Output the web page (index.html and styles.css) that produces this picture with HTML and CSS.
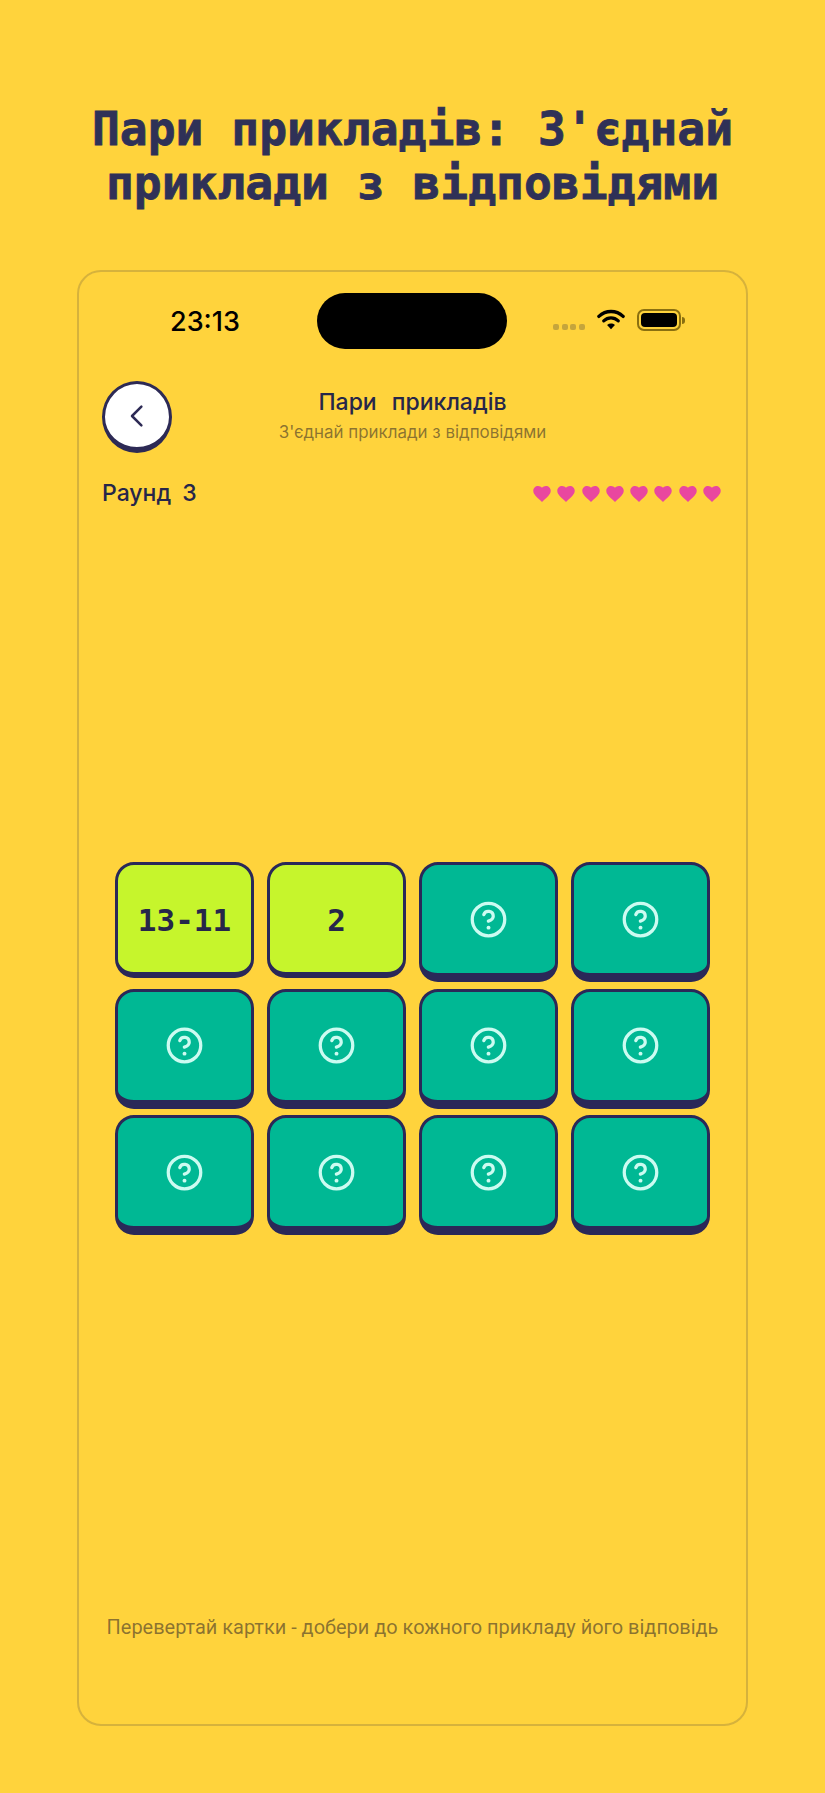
FILE: index.html
```html
<!DOCTYPE html>
<html lang="uk">
<head>
    <meta charset="UTF-8">
    <meta name="viewport" content="width=device-width, initial-scale=1.0">
    <title>Пари прикладів</title>
    <link rel="stylesheet" href="styles.css">
</head>
<body>
    <svg class="sprites" width="0" height="0" aria-hidden="true">
        <symbol id="icon-question" viewBox="0 0 24 24">
            <circle cx="12" cy="12" r="10" fill="none" stroke="currentColor" stroke-width="2"/>
            <path d="M9.09 9a3 3 0 0 1 5.83 1c0 2-3 3-3 3" fill="none" stroke="currentColor" stroke-width="2" stroke-linecap="round" stroke-linejoin="round"/>
            <path d="M12 17h.01" fill="none" stroke="currentColor" stroke-width="2.4" stroke-linecap="round"/>
        </symbol>
        <symbol id="icon-heart" viewBox="2 3 20 18.35">
            <path d="M12 21.35l-1.45-1.32C5.4 15.36 2 12.28 2 8.5 2 5.42 4.42 3 7.5 3c1.74 0 3.41.81 4.5 2.09C13.09 3.81 14.76 3 16.5 3 19.58 3 22 5.42 22 8.5c0 3.78-3.4 6.86-8.55 11.54L12 21.35z" fill="currentColor"/>
        </symbol>
    </svg>

    <h1 class="page-title">Пари прикладів: З'єднай приклади з відповідями</h1>

    <div class="phone">
        <div class="status-bar">
            <span class="status-time">23:13</span>
            <div class="island"></div>
            <div class="status-icons">
                <div class="signal"><i></i><i></i><i></i><i></i></div>
                <svg class="wifi" viewBox="0 0 30 22">
                    <path d="M2 8.2C9.5 1.2 20.5 1.2 28 8.2" fill="none" stroke="#000" stroke-width="3.6" stroke-linecap="round"/>
                    <path d="M7.2 13C11.8 8.8 18.2 8.8 22.8 13" fill="none" stroke="#000" stroke-width="3.4" stroke-linecap="round"/>
                    <path d="M15 22 10.8 17.3C13.3 15.3 16.7 15.3 19.2 17.3Z" fill="#000"/>
                </svg>
                <div class="battery"><div class="battery-level"></div></div>
                <div class="battery-cap"></div>
            </div>
        </div>

        <div class="game-header">
            <button class="back-btn" aria-label="Назад">
                <svg viewBox="0 0 24 24" width="30" height="30">
                    <path d="M15.5 4.5 8 12l7.5 7.5" fill="none" stroke="#2d2a55" stroke-width="2" stroke-linecap="round" stroke-linejoin="round"/>
                </svg>
            </button>
            <div class="game-heading">
                <h2>Пари прикладів</h2>
                <p>З'єднай приклади з відповідями</p>
            </div>
        </div>

        <div class="round-row">
            <span class="round-label">Раунд 3</span>
            <div class="hearts">
                <svg class="heart"><use href="#icon-heart"/></svg>
                <svg class="heart"><use href="#icon-heart"/></svg>
                <svg class="heart"><use href="#icon-heart"/></svg>
                <svg class="heart"><use href="#icon-heart"/></svg>
                <svg class="heart"><use href="#icon-heart"/></svg>
                <svg class="heart"><use href="#icon-heart"/></svg>
                <svg class="heart"><use href="#icon-heart"/></svg>
                <svg class="heart"><use href="#icon-heart"/></svg>
            </div>
        </div>

        <div class="board">
            <div class="card open">13-11</div>
            <div class="card open">2</div>
            <div class="card"><svg class="q"><use href="#icon-question"/></svg></div>
            <div class="card"><svg class="q"><use href="#icon-question"/></svg></div>
            <div class="card"><svg class="q"><use href="#icon-question"/></svg></div>
            <div class="card"><svg class="q"><use href="#icon-question"/></svg></div>
            <div class="card"><svg class="q"><use href="#icon-question"/></svg></div>
            <div class="card"><svg class="q"><use href="#icon-question"/></svg></div>
            <div class="card"><svg class="q"><use href="#icon-question"/></svg></div>
            <div class="card"><svg class="q"><use href="#icon-question"/></svg></div>
            <div class="card"><svg class="q"><use href="#icon-question"/></svg></div>
            <div class="card"><svg class="q"><use href="#icon-question"/></svg></div>
        </div>

        <p class="hint">Перевертай картки - добери до кожного прикладу його відповідь</p>
    </div>
</body>
</html>
```

FILE: styles.css
```css
* {
    box-sizing: border-box;
}
html, body {
    margin: 0;
    height: 100%;
}
body {
    background-color: #ffd33c;
    font-family: 'Inter', 'Noto Sans', sans-serif;
    color: #2d2a55;
    padding: 102px 77px 0;
    overflow: hidden;
}
.sprites {
    position: absolute;
}
.page-title {
    margin: 0 -20px;
    font-family: 'DejaVu Sans Mono', monospace;
    font-weight: 700;
    font-size: 46.3px;
    line-height: 54px;
    text-align: center;
    color: #2f3157;
    -webkit-text-stroke: 0.8px #2f3157;
}
.phone {
    width: 671px;
    height: 1456px;
    margin-top: 60px;
    border: 2.5px solid rgba(90, 80, 60, 0.25);
    border-radius: 24px;
    padding: 21px 23px 0;
    display: flex;
    flex-direction: column;
}
.status-bar {
    display: flex;
    align-items: center;
    height: 56px;
    flex-shrink: 0;
}
.status-time {
    width: 215px;
    padding-left: 68px;
    font-size: 27px;
    font-weight: 500;
    color: #000;
}
.island {
    width: 190px;
    height: 56px;
    background: #000;
    border-radius: 28px;
}
.status-icons {
    display: flex;
    align-items: center;
    margin-left: 46px;
}
.signal {
    display: flex;
    gap: 2.5px;
    margin-top: 12px;
    margin-right: 12px;
}
.signal i {
    width: 6px;
    height: 6px;
    border-radius: 2px;
    background: rgba(90, 80, 60, 0.35);
}
.wifi {
    width: 28px;
    height: 22px;
    margin-top: -4px;
    margin-right: 12px;
}
.battery {
    width: 44px;
    height: 22px;
    margin-top: -2px;
    border: 2px solid #8a6f10;
    border-radius: 7px;
    padding: 2px;
}
.battery-level {
    height: 100%;
    background: #000;
    border-radius: 4px;
}
.battery-cap {
    width: 3px;
    height: 7px;
    margin-top: -2px;
    margin-left: 1px;
    background: #8a6f10;
    border-radius: 0 3px 3px 0;
}
.game-header {
    display: flex;
    align-items: flex-start;
    margin-top: 32px;
    height: 72px;
    flex-shrink: 0;
}
.back-btn {
    width: 70px;
    height: 72px;
    flex-shrink: 0;
    background: #fff;
    border: 3px solid #2d2a55;
    border-bottom-width: 6px;
    border-radius: 50%;
    padding: 0;
    display: flex;
    align-items: center;
    justify-content: center;
}
.game-heading {
    flex: 1;
    text-align: center;
    padding-right: 70px;
    padding-top: 6px;
}
.game-heading h2 {
    margin: 0;
    font-size: 23px;
    line-height: 30px;
    font-weight: 500;
    word-spacing: 9px;
    color: #26264a;
}
.game-heading p {
    margin: 5px 0 0;
    font-size: 16.9px;
    line-height: 20px;
    color: rgba(60, 50, 40, 0.6);
}
.round-row {
    display: flex;
    align-items: center;
    justify-content: space-between;
    margin-top: 25px;
    height: 30px;
    flex-shrink: 0;
}
.round-label {
    font-size: 23px;
    font-weight: 500;
    word-spacing: 5px;
    color: #26264a;
}
.hearts {
    display: flex;
    gap: 6.3px;
    padding-right: 2px;
    padding-top: 2px;
}
.heart {
    width: 18px;
    height: 16px;
    color: #e9479f;
}
.board {
    display: grid;
    grid-template-columns: repeat(4, 139px);
    grid-auto-rows: 120px;
    gap: 6.5px 13px;
    justify-content: center;
    align-items: start;
    margin-top: 354px;
    flex-shrink: 0;
}
.card {
    height: 120px;
    background: #00b894;
    border: 3px solid #2a2858;
    border-bottom-width: 9px;
    border-radius: 19px;
    display: flex;
    align-items: center;
    justify-content: center;
}
.card.open {
    height: 116px;
    background: #c6f52c;
    border-bottom-width: 6px;
    padding-top: 3px;
    font-family: 'DejaVu Sans Mono', monospace;
    font-weight: 700;
    font-size: 31px;
    color: #26264a;
}
.q {
    width: 39px;
    height: 39px;
    color: #ccfbf1;
}
.hint {
    margin: 379px -20px 0;
    text-align: center;
    font-family: 'Roboto', sans-serif;
    font-size: 19.95px;
    line-height: 26px;
    color: rgba(60, 50, 40, 0.6);
}
```
